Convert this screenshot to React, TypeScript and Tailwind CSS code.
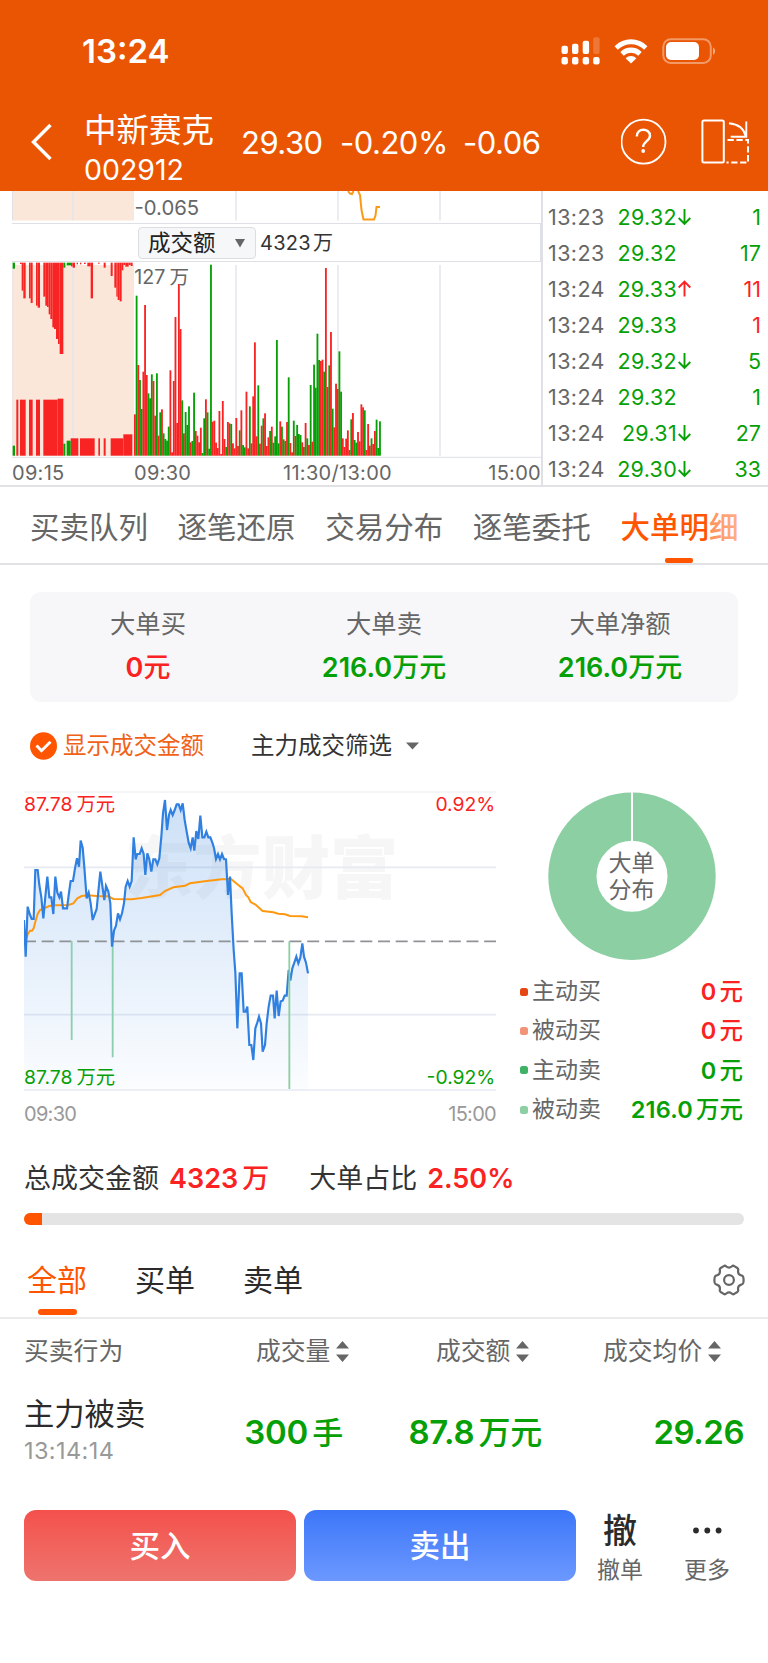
import clsx from "clsx";

const tabs = ["买卖队列", "逐笔还原", "交易分布", "逐笔委托", "大单明细"];

const trades = [
  { time: "13:23", price: "29.32", dir: "down", qty: "1", up: false },
  { time: "13:23", price: "29.32", dir: "", qty: "17", up: false },
  { time: "13:24", price: "29.33", dir: "up", qty: "11", up: true },
  { time: "13:24", price: "29.33", dir: "", qty: "1", up: true },
  { time: "13:24", price: "29.32", dir: "down", qty: "5", up: false },
  { time: "13:24", price: "29.32", dir: "", qty: "1", up: false },
  { time: "13:24", price: "29.31", dir: "down", qty: "27", up: false },
  { time: "13:24", price: "29.30", dir: "down", qty: "33", up: false },
];

const summary = [
  { label: "大单买", num: "0", unit: "元", color: "text-[#fa2222]" },
  { label: "大单卖", num: "216.0", unit: "万元", color: "text-[#06a006]" },
  { label: "大单净额", num: "216.0", unit: "万元", color: "text-[#06a006]" },
];

const legend = [
  { label: "主动买", num: "0", unit: "元", dot: "bg-[#e64614]", color: "text-[#fa2222]" },
  { label: "被动买", num: "0", unit: "元", dot: "bg-[#f29478]", color: "text-[#fa2222]" },
  { label: "主动卖", num: "0", unit: "元", dot: "bg-[#3fb265]", color: "text-[#06a006]" },
  { label: "被动卖", num: "216.0", unit: "万元", dot: "bg-[#8bcfa3]", color: "text-[#06a006]" },
];

// one entry per minute: colour + top of the bar
const volume =
  "r688 g332 r540 g585 g672 r560 r360 r570 g625 g640 g568 r588 r692 g565 r752 g682 r673 g745 g762 g767 " +
  "g725 r556 r802 r588 r396 r714 r297 r432 g646 r745 g681 g720 g664 r772 g768 g623 r738 r752 r772 r728 " +
  "g804 g700 r643 g682 g791 g239 r710 r707 r773 r789 r678 r807 r648 r762 g786 r711 r715 g717 r775 r790 " +
  "r699 r783 g736 r676 g780 g787 r620 r790 g664 r775 r634 r472 r754 g601 r776 r722 g700 r685 r783 r757 " +
  "g738 r725 g773 g754 g465 g775 r709 g725 r763 g768 r711 g577 r774 r802 g707 r753 g720 g747 g750 r772 " +
  "g786 r714 g760 r780 g600 r770 g539 g608 g446 g525 r528 r524 g560 r249 r606 g541 r441 g671 r727 r596 " +
  "r612 g499 g620 r760 r786 r761 r736 r795 g703 r684 g765 g773 r741 r769 r658 r667 g676 r795 r717 r782 " +
  "g760 r777 r738 g704 g789 g709";

// call auction bars hanging from the top: [x, width, bottom]
const auctionTop = [
  [60, 5, 237], [65, 5, 317], [70, 7, 340], [87, 5, 340], [92, 6, 354], [108, 5, 362], [113, 7, 368],
  [130, 6, 335], [136, 5, 362], [141, 5, 366], [146, 5, 388], [151, 6, 402], [157, 5, 427], [162, 6, 432],
  [168, 6, 462], [174, 5, 477], [179, 11, 507], [213, 5, 244], [218, 7, 248], [230, 4, 238], [240, 4, 238],
  [252, 5, 237], [262, 10, 244], [272, 7, 340], [294, 5, 236], [311, 6, 248], [332, 6, 273], [343, 6, 308],
  [349, 4, 335], [353, 6, 345], [359, 6, 349], [365, 5, 256], [370, 6, 240], [376, 10, 245], [386, 6, 240],
  [392, 6, 243],
];

// [x, width, top]
const auctionBottom = [
  [49, 6, 644], [60, 17, 644], [87, 11, 644], [108, 12, 644], [130, 43, 644], [173, 17, 641],
  [212, 23, 760], [240, 44, 760], [295, 5, 760], [311, 6, 760], [332, 38, 760], [370, 27, 748],
];

const priceLine =
  "72,420 77,530 83,380 89,402 95,417 101,417 106,270 113,270 118,315 124,352 130,415 136,350 142,290 148,352 " +
  "154,352 160,402 166,290 172,338 178,352 183,335 189,385 201,385 207,338 212,303 219,303 225,265 231,235 " +
  "237,260 242,182 248,203 253,262 260,355 266,338 272,370 278,420 284,403 290,387 295,335 301,275 307,318 " +
  "313,360 318,318 325,335 331,370 336,500 342,452 348,437 354,400 360,418 366,400 372,370 377,320 383,303 " +
  "389,320 395,303 401,172 407,238 412,222 419,222 425,205 431,222 436,285 442,220 448,238 454,275 460,238 " +
  "466,238 472,253 478,235 484,170 489,100 495,60 501,150 507,105 512,90 518,105 524,90 530,73 536,73 542,90 " +
  "548,70 554,120 560,155 566,188 572,205 578,172 583,212 589,153 595,177 601,107 607,172 613,172 619,155 " +
  "625,172 631,172 637,188 642,204 648,237 654,222 660,238 666,222 672,237 678,238 684,345 690,290 695,400 " +
  "701,510 706,577 712,745 719,580 725,580 731,695 737,695 742,680 748,795 754,795 760,840 766,745 772,727 " +
  "777,710 783,730 788,815 795,795 800,730 806,680 812,647 819,647 824,715 830,632 836,708 842,664 848,662 " +
  "854,647 860,647 866,570 871,602 877,565 883,548 889,530 895,550 901,533 907,490 912,530 918,548 924,580";

const avgLine =
  "77,480 83,463 90,452 96,452 101,445 106,425 113,402 120,390 130,386 148,378 165,376 205,375 220,370 232,355 " +
  "245,348 262,346 300,349 325,349 340,357 395,358 425,354 480,345 495,333 520,322 555,317 570,310 620,303 " +
  "665,298 693,297 712,313 728,325 738,345 745,352 752,366 768,375 788,393 820,397 835,401 855,403 870,408 " +
  "905,409 924,412";

const StatusBar = () => (
  <div className="flex h-[102px] items-center justify-between pl-[82px] pr-[51px] text-white">
    <span className="text-[33px] font-semibold leading-[40px]">13:24</span>
    <svg width="156" height="30" viewBox="0 0 156 30" fill="#fff">
      {/* signal */}
      <rect x="0.5" y="9.8" width="6.4" height="8.2" rx="2" />
      <rect x="11" y="7.8" width="6.4" height="10.2" rx="2" />
      <rect x="21.7" y="4.8" width="6.4" height="13.2" rx="2" />
      <rect x="32.2" y="1.2" width="6.4" height="16.8" rx="2" opacity="0.2" />
      {[0.5, 11, 21.7, 32.2].map((x) => (
        <rect key={x} x={x} y="21" width="6.4" height="7.4" rx="2.2" />
      ))}
      {/* wifi */}
      <path d="M53.6 10.2a23 23 0 0 1 32.8 0l-3.2 3.6a18.6 18.6 0 0 0-26.4 0z" />
      <path d="M59.3 16a15.2 15.2 0 0 1 21.4 0l-3.4 3.7a10.6 10.6 0 0 0-14.6 0z" />
      <path d="M64.6 22.2a8 8 0 0 1 10.8 0L70 27.4z" />
      {/* battery */}
      <rect x="102.3" y="3.2" width="47.5" height="23.8" rx="7.5" fill="none" stroke="#fff" strokeWidth="2" opacity="0.4" />
      <rect x="105" y="6" width="33" height="18" rx="5" />
      <path d="M152 11.5c2.8.9 2.8 6.3 0 7.2z" opacity="0.5" />
    </svg>
  </div>
);

const QuoteBar = () => (
  <div className="flex h-[89px] items-start text-white">
    <svg className="ml-[30px] mt-[21px]" width="24" height="38" viewBox="0 0 24 38" fill="none" stroke="#fff" strokeWidth="3.4">
      <path d="M20.5 2 3.5 19l17 17" />
    </svg>
    <div className="ml-[30px] w-[157px] pt-[10px]">
      <div className="text-[32.5px] leading-[38px]">中新赛克</div>
      <div className="pt-[1px] text-[28.5px] leading-[38px]">002912</div>
    </div>
    <div className="flex w-[377px] pt-[21px] text-[31px] leading-[40px] tracking-[-0.5px]">
      <span className="w-[99px]">29.30</span>
      <span className="w-[123px]">-0.20%</span>
      <span>-0.06</span>
    </div>
    <svg className="ml-[3px] mt-[15px]" width="46" height="48" viewBox="0 0 46 48" fill="none" stroke="#fff">
      <circle cx="22.5" cy="24.7" r="22" strokeWidth="1.8" />
      <path d="M15.8 19.5c0-9 13.2-8.6 13.2-.8 0 5.4-6.8 5.6-6.8 11.3" strokeWidth="2.4" />
      <circle cx="22.2" cy="34" r="1.9" fill="#fff" stroke="none" />
    </svg>
    <svg className="ml-[33px] mt-[15px]" width="50" height="48" viewBox="0 0 50 48" fill="none" stroke="#fff" strokeWidth="2">
      <rect x="2.4" y="3.4" width="21.4" height="42" rx="1.5" />
      <path d="M29 6.3c9 1 15 5.5 16.500 12.400M46.300 4.5v15.200H30.700" strokeWidth="1.9" />
      <path d="M27.500 23h20.500v22.400H26.500" strokeDasharray="6.3 2.6" />
    </svg>
  </div>
);

const VolumeChart = () => (
  <svg className="block" width="541" height="196" viewBox="0 231 1623 588">
    <rect x="37" y="240" width="365" height="573" fill="#fbe6da" />
    {[219, 708, 1014, 1320].map((x) => (
      <line key={x} x1={x} x2={x} y1="240" y2="812" stroke="#e3e6ec" strokeWidth="4.5" />
    ))}
    <path d="M38 231V812" stroke="#dfe1e6" strokeWidth="2" />
    <text x="403" y="297" fontSize="59" fill="#666">
      127<tspan dx="12">万</tspan>
    </text>
    <g fill="#f82323">
      {auctionTop.map(([x, w, y]) => (
        <rect key={x} x={x} y="233" width={w} height={y - 233} />
      ))}
      {auctionBottom.map(([x, w, y]) => (
        <rect key={x} x={x} y={y} width={w} height={812 - y} />
      ))}
    </g>
    <g fill="#06a006">
      <rect x="38" y="233" width="7" height="18" />
      <rect x="190" y="233" width="6" height="15" />
      <rect x="200" y="233" width="13" height="8" />
      <rect x="38" y="782" width="7" height="30" />
      <rect x="190" y="776" width="6" height="36" />
      <rect x="200" y="767" width="12" height="45" />
    </g>
    {volume.split(" ").map((bar, i) => {
      const top = Number(bar.slice(1));
      return (
        <rect
          key={i}
          x={402 + i * 5.07}
          y={top}
          width="5.5"
          height={812 - top}
          fill={bar[0] === "r" ? "#f82323" : "#06a006"}
        />
      );
    })}
    <line x1="36" x2="1623" y1="817" y2="817" stroke="#e3e5ea" strokeWidth="3.5" />
  </svg>
);

const TradeList = () => (
  <div className="w-[227px] border-l-2 border-[#dfe0e6] pl-[5px] pr-[7px] pt-[8px]">
    {trades.map((t, i) => (
      <div key={i} className="flex h-[36px] items-center text-[21.5px] leading-[36px]">
        <span className="w-[63px] tracking-[0.4px] text-[#666]">{t.time}</span>
        <span className="w-[66px] text-right tracking-[0.3px] text-[#06a006]">{t.price}</span>
        <svg
          className={t.dir === "up" ? "text-[#fa2222]" : "text-[#06a006]"}
          width="15" height="20" viewBox="0 0 15 20" fill="none" stroke="currentColor" strokeWidth="1.9"
        >
          {t.dir === "down" && <path d="M7.5 2v15M1.7 11l5.8 6 5.8-6" />}
          {t.dir === "up" && <path d="M7.5 17.5V3M1.7 8.500l5.8-6 5.8 6" />}
        </svg>
        <span className={clsx("flex-1 text-right", t.up ? "text-[#fa2222]" : "text-[#06a006]")}>{t.qty}</span>
      </div>
    ))}
  </div>
);

const MarketPanel = () => (
  <section className="flex h-[296px] border-b-2 border-[#e1e1e6]">
    <div className="w-[541px]">
      <svg className="block" width="541" height="32" viewBox="0 0 541 32">
        <rect x="12.5" y="0" width="121.5" height="29.5" fill="#fbe6da" />
        {[73, 236, 338, 440].map((x) => (
          <line key={x} x1={x} x2={x} y1="0" y2="29.5" stroke="#e3e6ec" strokeWidth="1.5" />
        ))}
        <path d="M12.5 0v29.5" stroke="#dfe1e6" />
        <text x="134.500" y="23.5" fontSize="20.3" fill="#666">-0.065</text>
        <path
          d="M348 0l2 2.5 2 .5 1.5-3M358 0l2 4 1.5 15 2 9.5h10.5l1.5-4 1-8.5h3.5"
          fill="none" stroke="#fb9a16" strokeWidth="2"
        />
      </svg>
      <div className="ml-[12px] flex h-[39px] items-center border-b border-r border-t border-[#dfe0e6]">
        <button className="ml-[126px] flex h-[32px] w-[118px] items-center rounded-[4px] border border-[#dcdde0] bg-[#f6f7f9] pl-[9px] pt-[1px] text-[22.5px] leading-[28px] text-[#222]">
          成交额
          <svg className="ml-[19px]" width="10" height="9" viewBox="0 0 10 9" fill="#666">
            <path d="M0 0h10L5 8.5z" />
          </svg>
        </button>
        <span className="ml-[4px] pt-[1px] text-[20px] tracking-[0.3px] text-[#333]">
          4323<span className="ml-[2px]">万</span>
        </span>
      </div>
      <VolumeChart />
      <div className="relative flex h-[27px] items-center justify-between pl-[12px] pt-[3px] text-[20px] leading-[27px] tracking-[0.3px] text-[#666]">
        <span>09:15</span>
        <span className="absolute left-[134px]">09:30</span>
        <span className="absolute left-[283px]">11:30/13:00</span>
        <span>15:00</span>
      </div>
    </div>
    <TradeList />
  </section>
);

const DetailTabs = () => (
  <nav className="relative flex h-[78px] gap-[29.6px] border-b-2 border-[#e1e1e6] pl-[30px]">
    {tabs.map((tab, i) => (
      <div
        key={tab}
        className={clsx(
          "flex w-[118px] flex-col items-center pt-[20px] text-[29.5px] leading-[40px]",
          i === 4 ? "font-medium text-[#ff5500]" : "text-[#666]"
        )}
      >
        {tab}
        {i === 4 && <span className="mt-[11px] h-[5px] w-[28px] rounded-[2px] bg-[#ff5500]" />}
      </div>
    ))}
    {/* fade at the scroll edge */}
    <div className="absolute right-0 top-0 h-[70px] w-[60px] bg-gradient-to-r from-white/35 to-white/70" />
  </nav>
);

const Summary = () => (
  <div className="mx-[30px] mt-[27px] grid h-[110px] grid-cols-3 rounded-[11px] bg-[#f7f7fa] pt-[15px] text-center">
    {summary.map((s) => (
      <div key={s.label}>
        <div className="text-[25.3px] leading-[34px] text-[#666]">{s.label}</div>
        <div className={clsx("pt-[10px] text-[27px] font-semibold leading-[34px]", s.color)}>
          {s.num}
          <span className="font-medium">{s.unit}</span>
        </div>
      </div>
    ))}
  </div>
);

const Filters = () => (
  <div className="flex h-[88px] items-center pl-[30px] text-[23.5px] leading-[30px]">
    <svg width="27" height="28" viewBox="0 0 27 28">
      <ellipse cx="13.5" cy="14" rx="13.5" ry="13.8" fill="#ff5500" />
      <path d="M6.5 13.5l5 5.2 9-9" fill="none" stroke="#fff" strokeWidth="3" />
    </svg>
    <span className="ml-[6px] text-[#f06218]">显示成交金额</span>
    <span className="ml-[47px] text-[#333]">主力成交筛选</span>
    <svg className="ml-[14px]" width="13" height="8" viewBox="0 0 13 8" fill="#666">
      <path d="M0 0.5h13L6.5 7.5z" />
    </svg>
  </div>
);

const TrendChart = () => (
  <div className="w-[472px]">
    <svg className="block" width="472" height="301" viewBox="72 30 1416 903">
      <defs>
        <linearGradient id="area" gradientUnits="userSpaceOnUse" x1="0" y1="60" x2="0" y2="930">
          <stop offset="0" stopColor="#2f80e0" stopOpacity="0.24" />
          <stop offset="1" stopColor="#2f80e0" stopOpacity="0.02" />
        </linearGradient>
      </defs>
      <text x="375" y="338" fontSize="205" fontWeight="900" fill="#f6f6f6">东方财富</text>
      {[36, 262, 704, 930].map((y) => (
        <line key={y} x1="72" x2="1488" y1={y} y2={y} stroke={y === 36 ? "#f1f2f5" : "#e6eaf2"} strokeWidth="5" />
      ))}
      <polygon points={`72,927 ${priceLine} 924,927`} fill="url(#area)" />
      <line x1="72" x2="1488" y1="484" y2="484" stroke="#8f9296" strokeWidth="5" strokeDasharray="36 17.1" />
      <polyline points={avgLine} fill="none" stroke="#ff980f" strokeWidth="6" />
      <path d="M215 484V780M338 484V832" stroke="#8bcfae" strokeWidth="5.5" />
      <polyline points={priceLine} fill="none" stroke="#2f80e0" strokeWidth="6.5" />
      <path d="M868 484V927" stroke="#8bcfa3" strokeWidth="5.5" />
      <g fontSize="58" fill="#fa2222">
        <text x="72" y="93">87.78<tspan dx="12">万元</tspan></text>
        <text x="1486" y="93" textAnchor="end">0.92%</text>
      </g>
      <g fontSize="58" fill="#06a006">
        <text x="72" y="911">87.78<tspan dx="12">万元</tspan></text>
        <text x="1486" y="911" textAnchor="end">-0.92%</text>
      </g>
    </svg>
    <div className="flex justify-between pt-[9px] text-[20px] leading-[28px] tracking-[-0.7px] text-[#999]">
      <span>09:30</span>
      <span>15:00</span>
    </div>
  </div>
);

const Distribution = () => (
  <div className="ml-[24px] w-[223px]">
    <svg className="ml-[27px] mt-[2px] block" width="170" height="170" viewBox="0 0 170 170">
      <circle cx="85" cy="84.3" r="59.6" fill="none" stroke="#8bcfa3" strokeWidth="48.2" />
      <path d="M85 0v50" stroke="#fff" strokeWidth="2" />
      <g fontSize="23" fill="#666" textAnchor="middle">
        <text x="84.500" y="78.5">大单</text>
        <text x="84.500" y="106">分布</text>
      </g>
    </svg>
    <div className="pt-[10px]">
      {legend.map((l) => (
        <div key={l.label} className="flex h-[39.3px] items-center text-[23px] leading-[39px]">
          <span className={clsx("h-[8px] w-[8px] rounded-[2.5px]", l.dot)} />
          <span className="ml-[4px] text-[#666]">{l.label}</span>
          <span className={clsx("ml-auto text-[23.5px] font-semibold tracking-[0.2px]", l.color)}>
            {l.num}
            <span className="ml-[3px] font-medium tracking-normal">{l.unit}</span>
          </span>
        </div>
      ))}
    </div>
  </div>
);

const Ratio = () => (
  <section className="px-[24px]">
    <div className="flex h-[60px] items-center pt-[2px] text-[27px] leading-[40px] text-[#333]">
      <span>总成交金额</span>
      <span className="ml-[10px] font-semibold text-[#fa2222]">
        4323<span className="ml-[4px] font-medium">万</span>
      </span>
      <span className="ml-[40px]">大单占比</span>
      <span className="ml-[10px] font-semibold text-[#fa2222]">2.50%</span>
    </div>
    <div className="mt-[5px] h-[12px] overflow-hidden rounded-full bg-[#e4e4e4]">
      <div className="h-full w-[18px] bg-[#ff5500]" />
    </div>
  </section>
);

const OrderTabs = () => (
  <nav className="flex h-[94px] items-start border-b-2 border-[#ebebeb] pl-[27px] pr-[23px] pt-[35px] text-[30px] leading-[40px] text-[#2b2b2b]">
    <div className="flex w-[108px] flex-col items-start text-[#ff5500]">
      全部
      <span className="ml-[11px] mt-[9px] h-[6px] w-[39px] rounded-[3px] bg-[#ff5500]" />
    </div>
    <span className="w-[108px]">买单</span>
    <span>卖单</span>
    <svg className="ml-auto mt-[4px]" width="32" height="32" viewBox="0 0 32 32" fill="none" stroke="#666" strokeWidth="2.2">
      <path d="M10.7 2.2Q12 1.2 13.3 2.5Q16 4.7 18.7 2.5Q20 1.2 21.3 2.2L24.3 4Q25.7 5 25.1 6.6Q24.6 10.4 28.3 11.4Q29.8 11.7 30.2 13Q31 16 30.2 19Q29.8 20.3 28.3 20.6Q24.6 21.6 25.1 25.4Q25.7 27 24.3 28L21.3 29.8Q20 30.8 18.7 29.5Q16 27.3 13.3 29.5Q12 30.8 10.7 29.8L7.7 28Q6.3 27 6.9 25.4Q7.4 21.6 3.7 20.6Q2.2 20.3 1.8 19Q1 16 1.8 13Q2.2 11.7 3.7 11.4Q7.4 10.4 6.9 6.6Q6.3 5 7.7 4Z" />
      <circle cx="16" cy="16" r="4.9" />
    </svg>
  </nav>
);

const SortIcon = () => (
  <svg className="ml-[6px]" width="13" height="21" viewBox="0 0 13 21" fill="#666">
    <path d="M0 7.500h13L6.5 0zM0 13.500h13l-6.5 7.500z" />
  </svg>
);

const OrderTable = () => (
  <section className="px-[24px]">
    <div className="flex h-[64px] items-center text-[24.8px] leading-[40px] text-[#666]">
      <span className="w-[232px]">买卖行为</span>
      <span className="flex w-[180px] items-center">成交量<SortIcon /></span>
      <span className="flex w-[167px] items-center">成交额<SortIcon /></span>
      <span className="flex items-center">成交均价<SortIcon /></span>
    </div>
    <div className="flex h-[94px] items-center pt-[1px]">
      <div className="w-[190px]">
        <div className="text-[30.3px] leading-[40px] text-[#2b2b2b]">主力被卖</div>
        <div className="pt-[1px] text-[23.5px] leading-[32px] tracking-[0.4px] text-[#999]">13:14:14</div>
      </div>
      <div className="flex flex-1 pt-[3px] text-[33px] font-semibold leading-[40px] tracking-[-0.2px] text-[#06a006]">
        <span className="w-[129px] text-right">300<span className="ml-[4px] text-[31px] font-medium">手</span></span>
        <span className="w-[199px] text-right">87.8<span className="ml-[4px] text-[32px] font-medium">万元</span></span>
        <span className="flex-1 text-right tracking-[-0.5px]">29.26</span>
      </div>
    </div>
  </section>
);

const ActionBar = () => (
  <footer className="flex h-[71px] pl-[24px] text-[#2b2b2b]">
    <button className="w-[272px] rounded-[12px] bg-gradient-to-b from-[#f4504b] to-[#ee736e] text-[30.5px] font-medium text-white">买入</button>
    <button className="ml-[8px] w-[272px] rounded-[12px] bg-gradient-to-b from-[#3c76f8] to-[#6c98ff] text-[30.5px] font-medium text-white">卖出</button>
    <div className="ml-[12px] flex w-[64px] flex-col items-center">
      <span className="pt-[1px] text-[34px] font-medium leading-[40px]">撤</span>
      <span className="pt-[4px] text-[23px] leading-[30px] text-[#666]">撤单</span>
    </div>
    <div className="ml-[23px] flex w-[64px] flex-col items-center">
      <svg className="shrink-0" width="30" height="41" viewBox="0 0 30 41" fill="#2b2b2b">
        <circle cx="4" cy="20.5" r="2.9" />
        <circle cx="15.3" cy="20.5" r="2.9" />
        <circle cx="26.6" cy="20.5" r="2.9" />
      </svg>
      <span className="pt-[4px] text-[23px] leading-[30px] text-[#666]">更多</span>
    </div>
  </footer>
);

export default function App() {
  return (
    <main className="h-[1663px] w-[768px] overflow-hidden bg-white font-['Inter','Noto_Sans_CJK_SC',sans-serif]">
      <header className="bg-[#ea5504]">
        <StatusBar />
        <QuoteBar />
      </header>
      <MarketPanel />
      <DetailTabs />
      <Summary />
      <Filters />
      <section className="flex h-[358px] pl-[24px]">
        <TrendChart />
        <Distribution />
      </section>
      <Ratio />
      <OrderTabs />
      <OrderTable />
      <div className="h-[33px]" />
      <ActionBar />
    </main>
  );
}
